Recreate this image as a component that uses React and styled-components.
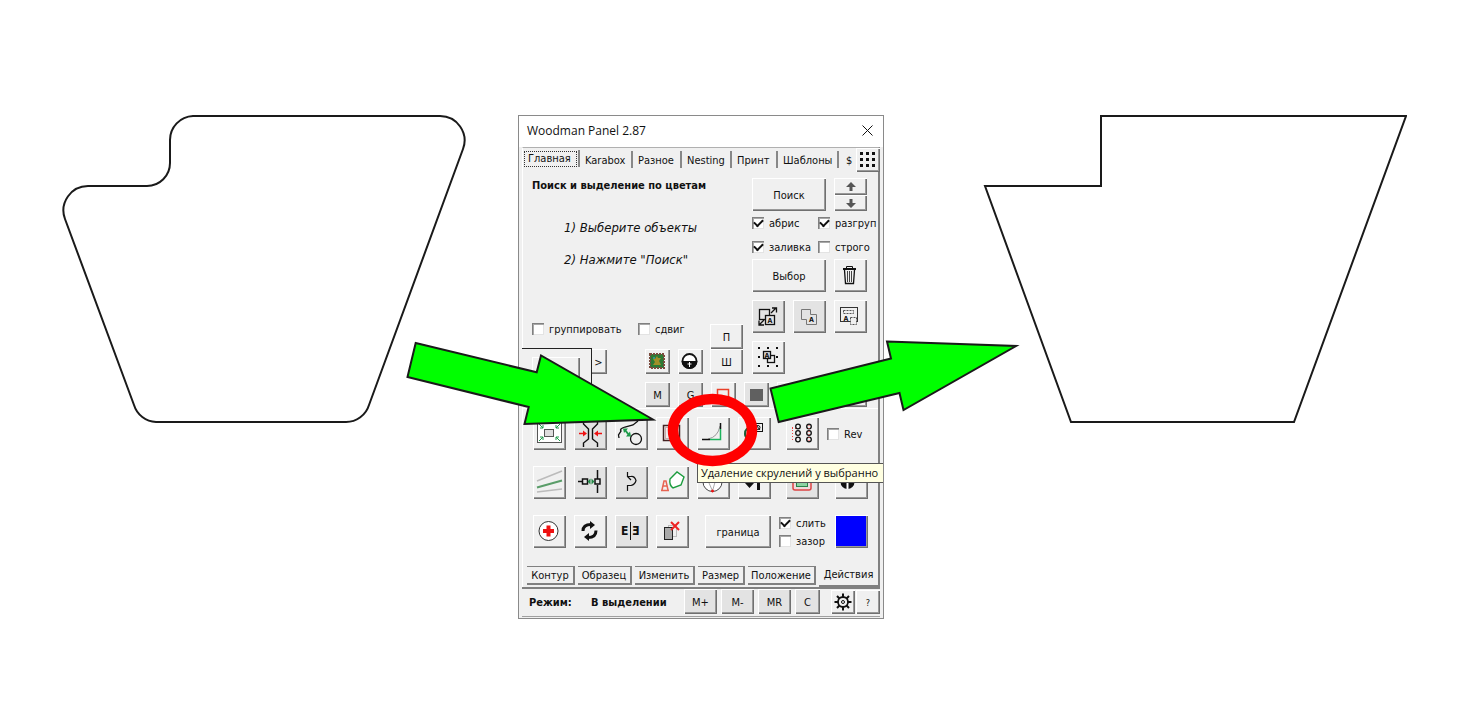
import React, { useState } from "react";
import styled, { createGlobalStyle, css } from "styled-components";

const topTabs = ["Главная", "Karabox", "Разное", "Nesting", "Принт", "Шаблоны", "$"];
const bottomTabs = ["Контур", "Образец", "Изменить", "Размер", "Положение", "Действия"];

function Check({ label, checked = false }) {
  const [on, setOn] = useState(checked);
  return (
    <CheckLabel>
      <input type="checkbox" checked={on} onChange={() => setOn(!on)} />
      <span>{label}</span>
    </CheckLabel>
  );
}

function Tool({ label, size = 33, dim, children }) {
  return (
    <ToolButton type="button" aria-label={label} $size={size} $dim={dim}>
      <svg width={size} height={size} viewBox={`0 0 ${size} ${size}`} fill="none" stroke="#111">
        {children}
      </svg>
    </ToolButton>
  );
}

function Letter({ x, y }) {
  return (
    <text x={x} y={y} textAnchor="middle" fontSize="7" fontWeight="bold" fill="#111" stroke="none">
      A
    </text>
  );
}

function SearchTools() {
  return (
    <SearchColumn>
      <ToolGrid>
        <WideButton type="button">Поиск</WideButton>
        <Spinner>
          <ArrowButton type="button" aria-label="Вверх">
            <svg width="10" height="10" viewBox="0 0 10 10" fill="#555">
              <path d="M5 0L10 5H6.500V9H3.500V5H0Z" />
            </svg>
          </ArrowButton>
          <ArrowButton type="button" aria-label="Вниз">
            <svg width="10" height="10" viewBox="0 0 10 10" fill="#555">
              <path d="M5 10L10 5H6.500V1H3.500V5H0Z" />
            </svg>
          </ArrowButton>
        </Spinner>
      </ToolGrid>
      <SearchChecks>
        <Check label="абрис" checked />
        <Check label="разгруп" checked />
        <Check label="заливка" checked />
        <Check label="строго" />
      </SearchChecks>
      <ToolGrid>
        <WideButton type="button">Выбор</WideButton>
        <Tool label="Удалить">
          <path d="M12.500 9V7.500H18.500V9" />
          <path d="M9 10H22" strokeWidth="2" />
          <path d="M10.500 11L11.500 24.500H19.500L20.500 11" strokeWidth="1.300" />
          <path d="M13.500 12V23M15.500 12V23M17.500 12V23" stroke="#444" />
        </Tool>
        <Tool label="Масштаб" dim>
          <rect x="7.5" y="9.5" width="10" height="10" strokeWidth="1.3" />
          <rect x="13.5" y="15.5" width="9" height="9" fill="#e3e3e3" strokeWidth="1.3" />
          <Letter x={18} y={23} />
          <path d="M19 13L24 8M20 8H24.500V12.500M12 20L7 25M7 20.500V25H12" strokeWidth="1.3" />
        </Tool>
        <Tool label="Объединить" dim>
          <path d="M8.500 9.500H17.500V14.500H23.500V24.500H13.500V19.500H8.500Z" stroke="#777" />
          <Letter x={18.5} y={22} />
        </Tool>
        <Tool label="Выделить область">
          <rect x="6.500" y="7.500" width="17" height="14" stroke="#333" />
          <rect x="9.500" y="10.500" width="10" height="3" stroke="#555" strokeDasharray="2 1" />
          <Letter x={12} y={21} />
          <rect x="16.500" y="17.500" width="6" height="7" fill="#f0f0f0" stroke="#555" strokeDasharray="2 1" />
        </Tool>
        <Tool label="Группа">
          <g fill="#111" stroke="none">
            {[6, 15, 24].map((x) =>
              [6, 15, 24].map((y) => x !== 15 || y !== 15 ? <rect key={`${x}-${y}`} x={x} y={y} width="2" height="2" /> : null)
            )}
          </g>
          <rect x="15.500" y="14.500" width="7" height="7" strokeWidth="1.3" />
          <rect x="11.500" y="10.500" width="7" height="7" fill="#ddd" strokeWidth="1.3" />
          <Letter x={15} y={17} />
        </Tool>
      </ToolGrid>
    </SearchColumn>
  );
}

function ActionTools() {
  return (
    <Actions>
      <Tool label="Вписать">
        <rect x="4.500" y="5.500" width="24" height="20" fill="#fff" stroke="#555" />
        <rect x="11.500" y="12.500" width="9" height="7" fill="#ddd" stroke="#555" />
        <path d="M6 7L10 11M7 11H10V8M27 7L23 11M23 8V11H26M6 24L10 20M7 20H10V23M27 24L23 20M23 23V20H26" stroke="#1e9a4a" />
      </Tool>
      <Tool label="Сжать" dim>
        <path d="M9.500 3V7L14.500 12V22L9.500 26V30M23.500 3V7L18.500 12V22L23.500 26V30" strokeWidth="1.4" />
        <path d="M5 16.500H10M28 16.500H23" stroke="#e11" strokeWidth="1.5" />
        <path d="M9 13.500L13 16.500L9 19.500ZM24 13.500L20 16.500L24 19.500Z" fill="#e11" stroke="none" />
      </Tool>
      <Tool label="Кривая">
        <path d="M23 4L18 8L10 10Q4 12 6 14L3.500 18L4 21" strokeWidth="1.3" />
        <path d="M10 13L14 18" stroke="#1e9a4a" strokeWidth="2" />
        <path d="M8 11.500H13L9 16ZM16 19.500H11L15 14.500Z" fill="#1e9a4a" stroke="none" />
        <circle cx="21" cy="22" r="5.500" strokeWidth="1.3" />
      </Tool>
      <Tool label="Рамка">
        <rect x="7.500" y="8.500" width="16" height="15" stroke="#422" strokeWidth="1.5" />
        <rect x="9.500" y="10.500" width="12" height="11" stroke="#caa" />
      </Tool>
      <Tool label="Удаление скруглений">
        <path d="M11 22Q21 20 23 9" stroke="#999" />
        <path d="M13 22.500H23.500V12" stroke="#1cb35c" strokeWidth="1.5" />
        <path d="M5 22.500H13M23.500 12V6" strokeWidth="1.5" />
      </Tool>
      <Tool label="Трассировка">
        <path d="M14 11Q7 10 7 17Q7 21 11 21" stroke="#185c33" strokeWidth="2" />
        <rect x="15.500" y="6.500" width="9" height="8" />
        <circle cx="20" cy="10.500" r="2" />
        <path d="M18 8L22 13" />
      </Tool>
      <End>
        <Tool label="Отверстия">
          <path d="M6.500 10V24M6 11.500H10M6 22.500H10" stroke="#e44" strokeDasharray="1 2" />
          {[9.5, 16, 22.5].map((y) => (
            <g key={y} strokeWidth="1.3">
              <circle cx="12" cy={y} r="2.300" />
              <circle cx="23" cy={y} r="2.300" />
            </g>
          ))}
          <path d="M23 8V24" stroke="#e44" strokeDasharray="1 2" />
        </Tool>
      </End>
      <Check label="Rev" />

      <Tool label="Линии">
        <path d="M4 15L29 5M4 26L29 23" stroke="#bbb" strokeWidth="1.500" />
        <path d="M4 21.500L29 14.500" stroke="#5a9d69" strokeWidth="2" />
      </Tool>
      <Tool label="Выровнять" dim>
        <path d="M4 15.500H8M23.500 4V13M23.500 19V27" strokeWidth="1.500" />
        <rect x="8.500" y="13" width="5" height="5" strokeWidth="1.500" />
        <rect x="21" y="13" width="5" height="5" strokeWidth="1.500" />
        <path d="M13.500 15.500L16.500 12.500V18.500ZM20.500 15.500L17.500 12.500V18.500Z" fill="#258a48" stroke="none" />
      </Tool>
      <Tool label="Соединить" dim>
        <path d="M12.500 6V10.500H16Q19.500 10 21 14.500Q20 18.500 16 19.500H12.500V25M12.500 10.500L16 14" strokeWidth="1.200" />
      </Tool>
      <Tool label="Форма">
        <path d="M5 24.500H13M6 24L8 15H10L12 24M7 20H11" stroke="#e76452" strokeWidth="1.500" />
        <path d="M14 13L21 6L28 11L25 19L17 22Q13 19 14 13Z" fill="#fff" stroke="#1b9c3d" strokeWidth="1.400" />
      </Tool>
      <Tool label="Диаметр">
        <circle cx="15.500" cy="16" r="9.500" fill="#fff" stroke="#444" />
        <path d="M9 10L15.500 25L20 9" stroke="#aaa" />
        <circle cx="15.500" cy="25" r="1" fill="#e11" stroke="#e11" />
      </Tool>
      <Tool label="Порядок">
        <path d="M11.500 9V20M20.500 24V12" strokeWidth="3" />
        <path d="M7 17H16L11.500 22ZM16 14L20.500 9L25 14Z" fill="#111" stroke="none" />
      </Tool>
      <End>
        <Tool label="Заливка контура" dim>
          <rect x="7" y="7" width="18" height="17" rx="2" fill="#eedada" stroke="#d44" strokeWidth="1.500" />
          <rect x="10.500" y="10.500" width="11" height="10" fill="#8cd3a2" stroke="#278447" />
        </Tool>
      </End>
      <End>
        <Tool label="Замок">
          <circle cx="12.500" cy="16" r="7" fill="#111" stroke="none" />
          <path d="M12.500 23V14" stroke="#fff" strokeWidth="2" />
          <path d="M9.500 17L12.500 13L15.500 17Z" fill="#fff" stroke="none" />
        </Tool>
      </End>

      <Tool label="Добавить">
        <circle cx="15.500" cy="16" r="9.500" fill="#fff" stroke="#333" />
        <path d="M15.500 10.500V21.500M10 16H21" stroke="#e11" strokeWidth="4" />
      </Tool>
      <Tool label="Обновить">
        <path d="M9 16Q9 9.500 17 9.500M22 15.500Q22 22.500 14 22.500" strokeWidth="3" />
        <path d="M16 6L21 10L16 14ZM15 26L10 22L15 18Z" fill="#111" stroke="none" />
      </Tool>
      <Tool label="Отразить" dim>
        <g fill="#111" stroke="none" fontSize="12" fontWeight="bold">
          <text x="6" y="20">E</text>
          <text x="17" y="20">Ǝ</text>
        </g>
        <path d="M15.500 7V25" strokeWidth="1" />
      </Tool>
      <Tool label="Удалить копию">
        <rect x="12.500" y="10.500" width="8" height="11" stroke="#bbb" />
        <rect x="8.500" y="12.500" width="8" height="12" fill="#aaa" stroke="#222" />
        <path d="M15 7L23 15M23 7L15 15" stroke="#e22" strokeWidth="2" />
      </Tool>
      <BorderButton type="button">граница</BorderButton>
      <StackedChecks>
        <Check label="слить" checked />
        <Check label="зазор" />
      </StackedChecks>
      <End>
        <ColorButton type="button" aria-label="Цвет" />
      </End>
    </Actions>
  );
}

function WoodmanPanel() {
  const [top, setTop] = useState("Главная");
  const [bottom, setBottom] = useState("Действия");

  return (
    <Window>
      <TitleBar>
        Woodman Panel 2.87
        <CloseButton type="button" aria-label="Закрыть">
          <svg width="11" height="11" viewBox="0 0 11 11" stroke="#111">
            <path d="M0.500 0.500L10.500 10.500M10.500 0.500L0.500 10.500" />
          </svg>
        </CloseButton>
      </TitleBar>
      <Frame>
        <TopTabs>
          {topTabs.map((tab) => (
            <TopTab key={tab} type="button" $active={tab === top} onClick={() => setTop(tab)}>
              <span>{tab}</span>
            </TopTab>
          ))}
          <DotsButton type="button" aria-label="Меню">
            <svg width="16" height="16" viewBox="0 0 16 16" fill="#111">
              {[0, 6, 12].map((x) => [0, 6, 12].map((y) => <rect key={`${x}-${y}`} x={x} y={y} width="3" height="3" />))}
            </svg>
          </DotsButton>
        </TopTabs>

        <Search>
          <Hints>
            <h1>Поиск и выделение по цветам</h1>
            <ol>
              <li>1) Выберите объекты</li>
              <li>2) Нажмите "Поиск"</li>
            </ol>
            <HintsFooter>
              <div>
                <GroupChecks>
                  <Check label="группировать" />
                  <Check label="сдвиг" />
                </GroupChecks>
                <SmallTools>
                  <NextButton type="button">&gt;</NextButton>
                  <Tool label="Картинка" size={25}>
                    <rect x="5" y="5" width="14" height="14" fill="#2d7a35" stroke="#7b4a3d" strokeWidth="2" strokeDasharray="2 1" />
                    <path d="M8 16H16L14 12L16 9H13L12 7L10 10H8L10 13Z" fill="#a08f28" stroke="none" />
                    <circle cx="9" cy="9" r="1" fill="#36a6a0" stroke="none" />
                  </Tool>
                  <Tool label="Блокировка" size={25}>
                    <circle cx="11.500" cy="12" r="7" fill="#fff" strokeWidth="1.800" />
                    <path d="M3.500 12H19.500A8 8 0 0 1 3.500 12Z" fill="#111" stroke="none" />
                    <path d="M11.500 13V18M9.500 15H13.500" stroke="#fff" />
                  </Tool>
                </SmallTools>
              </div>
              <PairColumn>
                <PairButton type="button">П</PairButton>
                <PairButton type="button">Ш</PairButton>
              </PairColumn>
            </HintsFooter>
          </Hints>
          <SearchTools />
        </Search>

        <Modes>
          <SmallButton type="button">M</SmallButton>
          <SmallButton type="button">G</SmallButton>
          <Tool label="Контур" size={25}>
            <rect x="6.500" y="7.500" width="11" height="11" stroke="#e8402a" strokeWidth="1.500" />
          </Tool>
          <Tool label="Заливка" size={25} dim>
            <rect x="6" y="7" width="13" height="12" fill="#606060" stroke="none" />
          </Tool>
          <BlankButton type="button" aria-label="Применить" />
        </Modes>

        <ActionTools />

        <BottomTabs>
          {bottomTabs.map((tab) => (
            <BottomTab key={tab} type="button" $active={tab === bottom} onClick={() => setBottom(tab)}>
              {tab}
            </BottomTab>
          ))}
        </BottomTabs>
      </Frame>

      <StatusBar>
        <b>Режим:</b>
        <b>В выделении</b>
        <Memory>
          <MemoryButton type="button">M+</MemoryButton>
          <MemoryButton type="button">M-</MemoryButton>
          <MemoryButton type="button">MR</MemoryButton>
          <MemoryButton type="button" $narrow>C</MemoryButton>
        </Memory>
        <Settings>
          <Tool label="Настройки" size={24}>
            <circle cx="12" cy="12" r="5" strokeWidth="1.800" />
            <circle cx="12" cy="12" r="1.500" />
            {[0, 45, 90, 135, 180, 225, 270, 315].map((a) => (
              <path key={a} d="M12 7V3.500" strokeWidth="2" transform={`rotate(${a} 12 12)`} />
            ))}
          </Tool>
          <HelpButton type="button">?</HelpButton>
        </Settings>
      </StatusBar>

      <Popup>
        <BlankButton type="button" aria-label="Образец" />
      </Popup>
      <Tooltip role="tooltip">Удаление скрулений у выбранно</Tooltip>
    </Window>
  );
}

export default function App() {
  return (
    <>
      <GlobalStyle />
      <Stage>
        <Outline width="406" height="310" viewBox="0 0 406 310">
          <path d="M133 1H380A24.500 24.500 0 0 1 403 34L309 290A24 24 0 0 1 286 307H96A24 24 0 0 1 74 290L5 104A24.500 24.500 0 0 1 28 71H87A23 23 0 0 0 110 48V25A24 24 0 0 1 133 1Z" />
        </Outline>
        <PanelHolder>
          <WoodmanPanel />
          <Pointers viewBox="518 115 366 504">
            <g fill="#0f0" stroke="#1a1a1a" strokeWidth="2">
              <path d="M415.700 343L536.700 372.300L541 355.500L653 419.500L524.500 424L528.700 407L407.500 377Z" />
              <path d="M887 341.500L1016 346L903.500 410L899.500 393L778.700 422L770.500 388.500L891 358.500Z" />
            </g>
            <ellipse cx="712.500" cy="430" rx="39.500" ry="31" fill="none" stroke="#f00" strokeWidth="10.500" />
          </Pointers>
        </PanelHolder>
        <Outline width="424" height="310" viewBox="0 0 424 310">
          <path d="M118 1H423L311 307H88L2 71H118Z" />
        </Outline>
      </Stage>
    </>
  );
}

const GlobalStyle = createGlobalStyle`
  * {
    box-sizing: border-box;
  }
  body {
    margin: 0;
    background: #fff;
    color: #111;
    font-family: "DejaVu Sans Condensed", "Noto Sans", sans-serif;
    font-size: 11px;
    line-height: 14px;
  }
  button {
    font: inherit;
    color: inherit;
    padding: 0;
    border: 0;
    background: none;
  }
  svg {
    display: block;
    flex-shrink: 0;
  }
`;

const raised = css`
  background: #f0f0f0;
  box-shadow: inset 1px 1px #fff, inset -1px -1px #707070, inset -2px -2px #999;
`;

const Stage = styled.main`
  display: flex;
  justify-content: center;
  align-items: flex-start;
  min-height: 100vh;
  padding-top: 115px;
`;

const Outline = styled.svg`
  fill: none;
  stroke: #1a1a1a;
  stroke-width: 2;
`;

const PanelHolder = styled.div`
  position: relative;
  flex-shrink: 0;
  margin: 0 99px 0 52px;
`;

const Pointers = styled.svg`
  position: absolute;
  inset: 0;
  width: 100%;
  height: 100%;
  overflow: visible;
  pointer-events: none;
`;

const Window = styled.section`
  position: relative;
  overflow: hidden;
  width: 366px;
  padding-bottom: 1px;
  border: 1px solid #8a8a8a;
  background: #f0f0f0;
`;

const TitleBar = styled.header`
  display: flex;
  align-items: center;
  justify-content: space-between;
  height: 31px;
  padding: 0 9px 2px 8px;
  background: #fff;
  font-family: "Open Sans", "Noto Sans", sans-serif;
  font-size: 12px;
`;

const CloseButton = styled.button`
  width: 12px;
  height: 12px;
`;

const Frame = styled.div`
  margin: 0 3px;
  border-left: 1px solid #fff;
  border-right: 2px solid #808080;
  border-top: 1px solid #b0b0b0;
`;

const TopTabs = styled.nav`
  display: grid;
  grid-template-columns: 57px 53px 49px 50px 46px 61px 17px 24px;
  height: 24px;
`;

const TopTab = styled.button`
  display: flex;
  align-items: center;
  height: 17px;
  margin-top: 3px;
  padding: 2px 0 0 5px;
  border-right: 2px solid #888;
  ${({ $active }) =>
    $active &&
    css`
      padding: 0 0 0 1px;
      margin-top: 2px;
      span {
        padding: 0 5px 0 3px;
        border: 1px dotted #333;
      }
    `}
  &:nth-child(7) {
    border-right: 0;
    padding-left: 7px;
  }
`;

const DotsButton = styled.button`
  ${raised}
  display: grid;
  place-items: center;
  width: 24px;
  height: 24px;
`;

const Search = styled.div`
  display: grid;
  grid-template-columns: 211px 1fr;
  column-gap: 9px;
  padding: 6px 0 0 9px;
`;

const Hints = styled.div`
  display: flex;
  flex-direction: column;
  h1 {
    margin: 0;
    font-size: 11px;
    line-height: 16px;
    font-weight: bold;
    white-space: nowrap;
  }
  ol {
    list-style: none;
    margin: 18px 0 0;
    padding: 0 0 0 32px;
    font-size: 13px;
    line-height: 32px;
    font-style: italic;
  }
`;

const HintsFooter = styled.div`
  display: flex;
  align-items: flex-end;
  justify-content: space-between;
  margin-top: auto;
`;

const GroupChecks = styled.div`
  display: grid;
  grid-template-columns: 106px auto;
  margin-bottom: 13px;
`;

const SmallTools = styled.div`
  display: flex;
  gap: 8px;
  padding-left: 58px;
`;

const ToolButton = styled.button`
  ${raised}
  flex-shrink: 0;
  width: ${({ $size }) => $size}px;
  height: ${({ $size }) => $size}px;
  ${({ $dim }) => $dim && "background: #e3e3e3;"}
`;

const TextButton = styled.button`
  ${raised}
  padding-top: 2px;
  text-align: center;
`;

const NextButton = styled(TextButton)`
  width: 17px;
  height: 25px;
  margin-right: 30px;
`;

const PairColumn = styled.div`
  display: flex;
  flex-direction: column;
`;

const PairButton = styled(TextButton)`
  width: 33px;
  height: 25px;
`;

const SmallButton = styled(TextButton)`
  width: 25px;
  height: 25px;
  background: #e3e3e3;
`;

const BlankButton = styled(TextButton)`
  width: 90px;
  height: 25px;
`;

const SearchColumn = styled.div`
  display: flex;
  flex-direction: column;
`;

const ToolGrid = styled.div`
  display: grid;
  grid-template-columns: repeat(3, 33px);
  gap: 8px;
`;

const WideButton = styled(TextButton)`
  grid-column: span 2;
  height: 33px;
`;

const Spinner = styled.div`
  display: grid;
  grid-template-rows: 17px 16px;
`;

const ArrowButton = styled.button`
  ${raised}
  display: grid;
  place-items: center;
`;

const SearchChecks = styled.div`
  display: grid;
  grid-template-columns: 66px 1fr;
  grid-auto-rows: 24px;
  align-items: center;
`;

const CheckLabel = styled.label`
  display: flex;
  align-items: center;
  gap: 5px;
  height: 14px;
  white-space: nowrap;
  span {
    padding-top: 2px;
  }
  input {
    appearance: none;
    flex-shrink: 0;
    display: grid;
    place-items: center;
    width: 12px;
    height: 12px;
    margin: 0;
    background: #fff;
    box-shadow: inset 1px 1px #808080, inset 2px 2px #a8a8a8, inset -1px -1px #e3e3e3;
  }
  input:checked::after {
    content: "";
    width: 7px;
    height: 4px;
    margin-bottom: 2px;
    border: solid #111;
    border-width: 0 0 2px 2px;
    transform: rotate(-45deg);
  }
`;

const Modes = styled.div`
  display: flex;
  gap: 8px;
  padding: 8px 0 0 122px;
`;

const Actions = styled.div`
  display: grid;
  grid-template-columns: repeat(6, 33px) 40px 41px;
  grid-auto-rows: 33px;
  gap: 16px 8px;
  align-items: center;
  margin-top: 1px;
  padding: 8px 0 18px 10px;
  border-top: 1px solid #fff;
`;

const End = styled.div`
  display: grid;
  justify-self: end;
`;

const BorderButton = styled(TextButton)`
  grid-column: span 2;
  justify-self: end;
  width: 66px;
  height: 33px;
`;

const StackedChecks = styled.div`
  display: grid;
  gap: 4px;
`;

const ColorButton = styled(TextButton)`
  width: 33px;
  height: 33px;
  background: #00f;
`;

const BottomTabs = styled.nav`
  display: grid;
  grid-template-columns: 48px 54px 60px 47px 68px 1fr;
  column-gap: 3px;
  height: 21px;
  padding-left: 4px;
`;

const BottomTab = styled.button`
  height: 19px;
  padding-top: 2px;
  border: solid #808080;
  border-width: 1px 2px 2px 0;
  ${({ $active }) =>
    $active &&
    css`
      height: 21px;
      padding: 0 0 2px;
      border-width: 0 0 2px;
    `}
`;

const StatusBar = styled.footer`
  display: grid;
  grid-template-columns: 62px 93px 147px 1fr;
  align-items: center;
  margin: 0 3px;
  padding: 0 0 2px 7px;
  border-top: 2px solid #808080;
  border-bottom: 1px solid #a0a0a0;
  b {
    padding-top: 2px;
  }
`;

const Memory = styled.div`
  display: flex;
  gap: 4px;
`;

const MemoryButton = styled(TextButton)`
  width: ${({ $narrow }) => ($narrow ? 25 : 33)}px;
  height: 25px;
  background: #e3e3e3;
`;

const Settings = styled.div`
  display: flex;
  gap: 1px;
`;

const HelpButton = styled(TextButton)`
  width: 24px;
  height: 24px;
  font-size: 9px;
`;

/* floats over the sample area */
const Popup = styled.div`
  position: absolute;
  top: 232px;
  left: 3px;
  width: 70px;
  height: 50px;
  padding: 8px 10px;
  border: solid #222;
  border-width: 1px 1px 0 0;
  background: #f0f0f0;
  ${BlankButton} {
    width: 48px;
  }
`;

const Tooltip = styled.div`
  position: absolute;
  top: 347px;
  right: -1px;
  left: 178px;
  height: 20px;
  padding: 0 3px;
  border: 1px solid #555;
  background: #ffffe1;
  font-family: "Open Sans", "Noto Sans", sans-serif;
  font-size: 11px;
  line-height: 18px;
  white-space: nowrap;
`;
